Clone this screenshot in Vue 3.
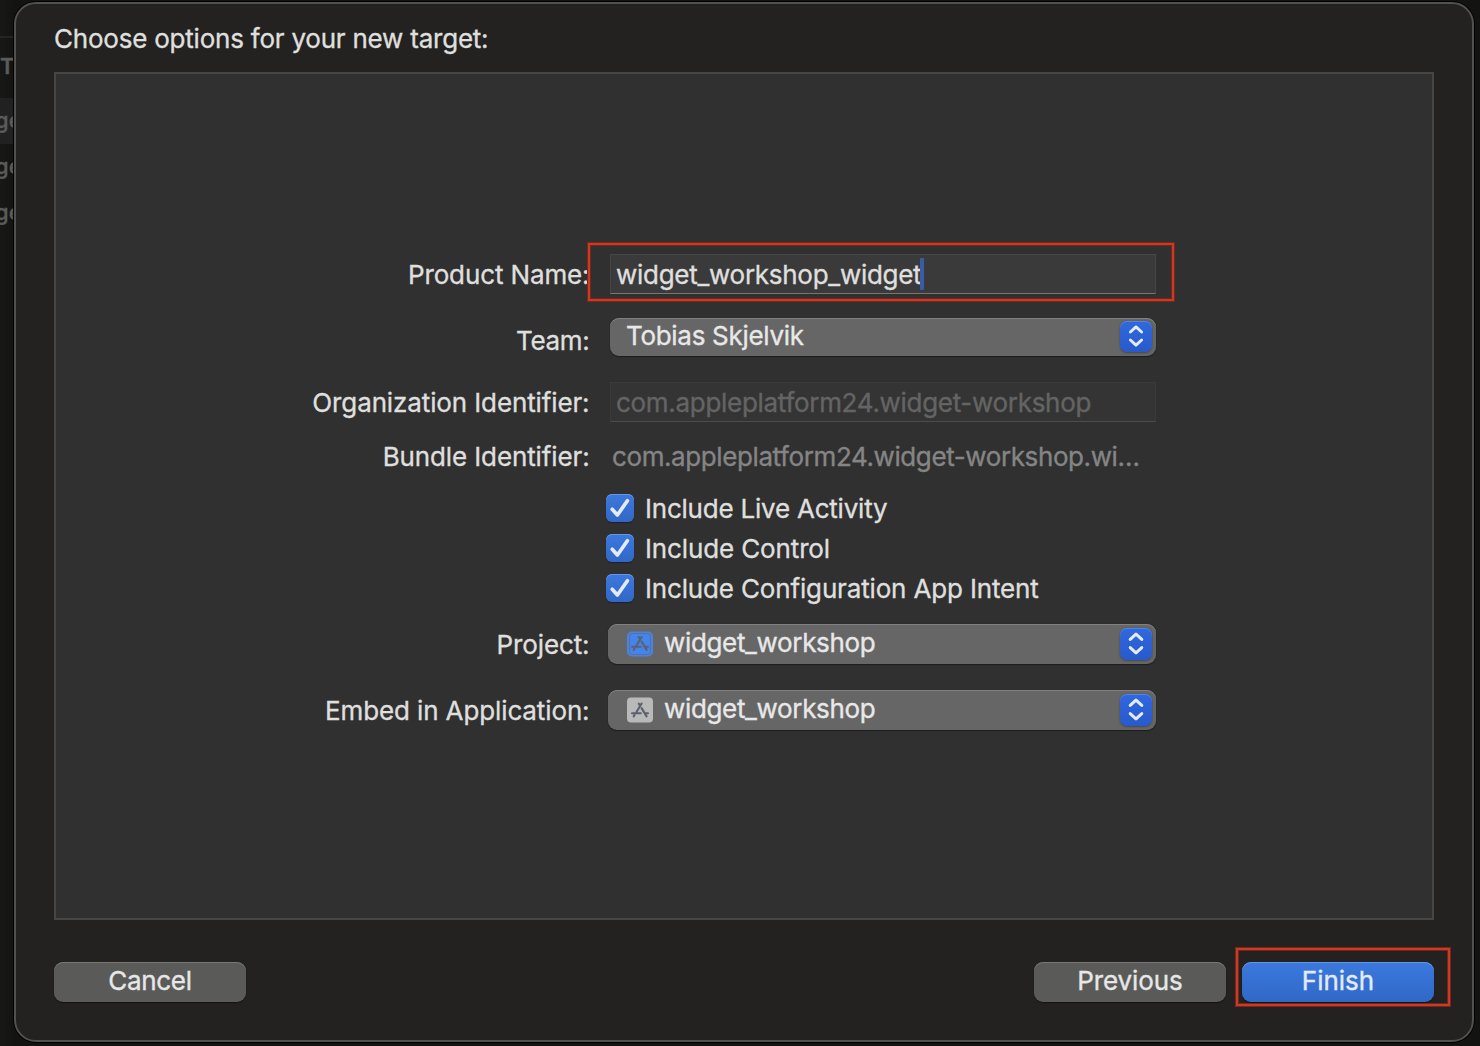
<script setup>
const checks = [
  { label: 'Include Live Activity', cls: 'tight' },
  { label: 'Include Control', cls: 'loose' },
  { label: 'Include Configuration App Intent', cls: 'mid' },
]
const popups = [
  { label: 'Project:', kind: 'project' },
  { label: 'Embed in Application:', kind: 'app' },
]
const behind = ['ge', 'ge', 'ge']
</script>

<template>
  <div class="screen">
    <aside class="behind">
      <div class="tab">T</div>
      <div v-for="(b, i) in behind" :key="i" class="item" :class="{ selected: i === 0 }">{{ b }}</div>
    </aside>
    <section class="sheet">
      <h1 class="title">Choose options for your new target:</h1>
      <div class="panel">
        <div class="row name">
          <label class="product">Product Name:</label>
          <div class="control field active">
            <span>widget_workshop_widget</span><i class="caret"></i>
            <div class="mark mark-field"></div>
          </div>
        </div>
        <div class="row team">
          <label class="team-label">Team:</label>
          <div class="control popup">
            <span class="value team-value">Tobias Skjelvik</span>
            <svg class="stepper" viewBox="0 0 32 32"><path d="M10.2 11.4 16 6.1l5.8 5.3M10.2 19.6l5.8 5.3 5.8-5.3" /></svg>
          </div>
        </div>
        <div class="row org">
          <label>Organization Identifier:</label>
          <div class="control field disabled"><span>com.appleplatform24.widget-workshop</span></div>
        </div>
        <div class="row bundle">
          <label>Bundle Identifier:</label>
          <div class="control static">com.appleplatform24.widget-workshop.wi…</div>
        </div>
        <div class="checks">
          <div v-for="c in checks" :key="c.label" class="check">
            <span class="box">
              <svg viewBox="0 0 28 28"><path d="M6.2 15.3 11.4 21 21.4 6.8" /></svg>
            </span>
            <span :class="c.cls">{{ c.label }}</span>
          </div>
        </div>
        <div v-for="p in popups" :key="p.kind" class="row pick" :class="p.kind">
          <label>{{ p.label }}</label>
          <div class="control popup wide">
            <svg class="app-icon" viewBox="0 0 26 26">
              <rect class="tile" y="0.5" width="26" height="25" :rx="p.kind === 'project' ? 5 : 4" />
              <rect v-if="p.kind === 'project'" class="inset" x="2.5" y="2.5" width="21" height="21" rx="2.5" />
              <g class="glyph">
                <path d="M14.6 6 9.2 15M11.8 6.2l1.4 2.1M14.6 10.6 19.6 18.9M5 15.7h8.8M17.6 15.7h3.4M7.5 17.6l-.8 1.2" />
              </g>
            </svg>
            <span class="value">widget_workshop</span>
            <svg class="stepper" viewBox="0 0 32 32"><path d="M10.2 11.4 16 6.1l5.8 5.3M10.2 19.6l5.8 5.3 5.8-5.3" /></svg>
          </div>
        </div>
      </div>
      <footer class="actions">
        <button class="btn cancel">Cancel</button>
        <button class="btn previous">Previous</button>
        <button class="btn primary">Finish<span class="mark mark-finish"></span></button>
      </footer>
    </section>
  </div>
</template>

<style>
body { margin: 0; background: #151513; }
</style>

<style scoped>
* { box-sizing: border-box; }
.screen {
  position: relative;
  display: flex;
  width: 1480px;
  height: 1046px;
  padding: 2px 6px 4px 14px;
  overflow: hidden;
  background: linear-gradient(90deg, #181816 0, #131312 14px, #131312 100%);
  font: 400 26px/40px Inter, "Liberation Sans", sans-serif;
  color: #dfdfde;
  -webkit-text-stroke: 0.35px currentColor;
}
.behind {
  position: absolute;
  left: 0;
  top: 0;
  width: 14px;
  height: 240px;
  color: #5b5b5a;
  font-size: 22px;
  line-height: 44px;
}
.tab { height: 98px; padding-top: 44px; font-weight: 600; background: linear-gradient(#242422, #242422) 0 36px / 100% 2px no-repeat; }
.item { height: 46px; text-indent: -5px; font-weight: 500; white-space: nowrap; }
.item.selected { background: #212122; }
.sheet {
  position: relative;
  display: flex;
  flex-direction: column;
  width: 1460px;
  height: 1040px;
  padding: 15px 38px 0;
  border: 2px solid #51514f;
  border-radius: 22px;
  background: #232220;
  box-shadow: 0 0 0 1px #000;
}
.title { margin: 0; height: 40px; font-size: 26px; font-weight: 400; letter-spacing: -0.22px; }
.panel {
  display: flex;
  flex-direction: column;
  width: 1380px;
  height: 848px;
  margin-top: 13px;
  padding-top: 180px;
  border: 2px solid #464646;
  background: #303030;
}
.row { display: flex; height: 40px; }
.row label { width: 534px; text-align: right; white-space: nowrap; letter-spacing: -0.12px; padding: 1px 0.5px 0 0; }
.row .control { width: 546px; margin-left: 20px; }
.row .popup.wide { width: 548px; margin-left: 18px; }
.team { height: 38px; margin-top: 24px; }
.row .team-label { padding-top: 3px; letter-spacing: -0.3px; }
.org { margin-top: 26px; }
.bundle { margin-top: 14px; }
.row .static { margin-left: 22px; padding-top: 1px; color: #858585; letter-spacing: -0.4px; white-space: nowrap; }
.field {
  position: relative;
  display: flex;
  align-items: center;
  height: 40px;
  padding: 2px 0 0 5px;
  border: 1px solid #464646;
  border-bottom: 1px solid #757575;
  background: #3a3a3a;
  letter-spacing: -0.275px;
}
.field.disabled { border-color: #3a3a3a; border-bottom-color: #4c4c4c; background: #343434; color: #646464; letter-spacing: -0.3px; }
.caret { width: 4px; height: 32px; margin: -2px 0 0 -1px; border-radius: 1px; background: #385da8; }
.mark {
  position: absolute;
  border: 2px solid #d2381f;
  outline: 1px solid #72291f;
  box-shadow: inset 0 0 0 1px #6b2a21;
}
.mark-field { left: -23px; top: -12px; width: 586px; height: 58px; }
.popup {
  display: flex;
  align-items: center;
  height: 100%;
  padding: 0 4px 0 17px;
  border-radius: 9px;
  background: #666;
  box-shadow: inset 0 1px 0 #818181, 0 1px 1px #1d1d1d, 0 0 1px #222;
}
.popup .value { margin-top: -3px; letter-spacing: -0.34px; }
.popup .team-value { margin-left: -1px; letter-spacing: -0.3px; color: #e8e8e8; }
.popup.wide { padding-left: 19px; }
.popup.wide .value { margin-left: 11px; color: #e8e8e8; }
.stepper {
  width: 32px;
  height: 32px;
  margin-left: auto;
  border-radius: 7px;
  background: linear-gradient(#3068df, #285acb);
  box-shadow: inset 0 1px 0 #5485e4, 0 1px 2px #4a4a4a, 0 0 1px #444;
}
.team .stepper { height: 31px; margin-top: -1px; }
.stepper path, .box path { fill: none; stroke: #e3ebfa; stroke-linecap: round; stroke-linejoin: round; stroke-width: 3; }
.checks { display: flex; flex-direction: column; margin-top: 12px; padding-left: 550px; }
.check { display: flex; height: 40px; padding-top: 1px; }
.check > span:last-child { margin-left: 11px; white-space: nowrap; }
.tight { letter-spacing: -0.22px; }
.loose { letter-spacing: -0.13px; }
.mid { letter-spacing: -0.155px; }
.box {
  width: 28px;
  height: 28px;
  margin-top: 5px;
  border-radius: 6px;
  background: linear-gradient(#3c78de, #3168c6);
  box-shadow: inset 0 1px 0 #6596e6, 0 1px 1px #1d2230;
}
.box svg { display: block; width: 28px; height: 28px; }
.box path { stroke-width: 3.7; }
.pick { margin-top: 16px; }
.pick + .pick { margin-top: 26px; }
.app-icon { width: 26px; height: 26px; }
.project .tile { fill: #4484ec; }
.project .inset { fill: none; stroke: #626f87; stroke-width: 1; }
.app .tile { fill: #b9b9b9; }
.glyph path { fill: none; stroke: #5c626c; stroke-width: 2.1; stroke-linecap: round; }
.app .glyph { transform: translateY(0.5px); }
.actions { display: flex; margin-top: 42px; }
.btn {
  position: relative;
  width: 192px;
  height: 40px;
  padding: 0 0 3px;
  border: 0;
  border-radius: 9px;
  background: #5a5a58;
  box-shadow: inset 0 1px 0 #777775, 0 1px 1px #131311;
  color: #e7e7e7;
  font: inherit;
  line-height: 37px;
}
.cancel { letter-spacing: -0.3px; }
.previous { margin-left: auto; letter-spacing: -0.1px; }
.primary {
  margin-left: 16px;
  background: linear-gradient(#3b79df, #3068c5);
  box-shadow: inset 0 1px 0 #6596e6, 0 1px 1px #131311;
  color: #e3ebfa;
}
.mark-finish { left: -6px; top: -14px; width: 214px; height: 58px; }
</style>
